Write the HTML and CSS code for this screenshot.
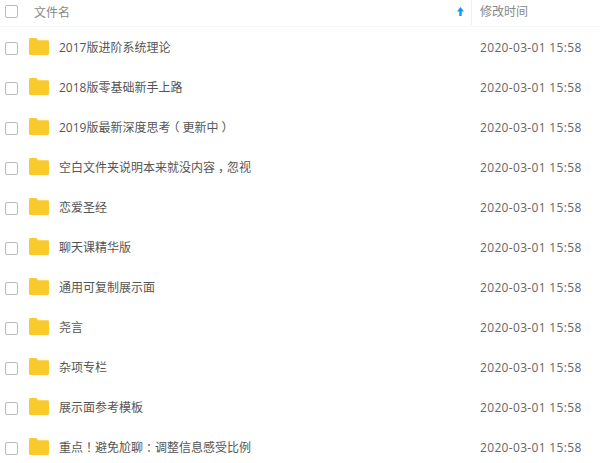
FILE: index.html
```html
<!DOCTYPE html>
<html lang="zh-CN">
<head>
  <meta charset="UTF-8">
  <title>文件列表</title>
  <link rel="stylesheet" href="styles.css">
</head>
<body>
  <svg class="defs" width="0" height="0">
    <symbol id="folder" viewBox="0 0 20 17">
      <path d="M0 1.500C0 .7.6 0 1.400 0h5.400c.5 0 .9.2 1.200.6L9.300 2.200H18.600c.8 0 1.400.6 1.400 1.400v12c0 .8-.6 1.400-1.400 1.400H1.400C.6 17 0 16.400 0 15.600z" fill="#fac92c"/>
    </symbol>
  </svg>
  <div class="head">
    <span class="check"></span>
    <div class="head-name">
      <span>文件名</span>
      <svg class="sort" width="7" height="9" viewBox="0 0 7 9"><path d="M3.500 0 7 4.500H4.700V9H2.300V4.500H0z" fill="#0a9bf2"/></svg>
    </div>
    <div class="head-time">修改时间</div>
  </div>

  <div class="row"><span class="check"></span><svg class="folder"><use href="#folder"/></svg><span class="name">2017版进阶系统理论</span><span class="time">2020-03-01 15:58</span></div>
  <div class="row"><span class="check"></span><svg class="folder"><use href="#folder"/></svg><span class="name">2018版零基础新手上路</span><span class="time">2020-03-01 15:58</span></div>
  <div class="row"><span class="check"></span><svg class="folder"><use href="#folder"/></svg><span class="name">2019版最新深度思考<span class="mark">（</span>更新中<span class="mark">）</span></span><span class="time">2020-03-01 15:58</span></div>
  <div class="row"><span class="check"></span><svg class="folder"><use href="#folder"/></svg><span class="name">空白文件夹说明本来就没内容<span class="mark">，</span>忽视</span><span class="time">2020-03-01 15:58</span></div>
  <div class="row"><span class="check"></span><svg class="folder"><use href="#folder"/></svg><span class="name">恋爱圣经</span><span class="time">2020-03-01 15:58</span></div>
  <div class="row"><span class="check"></span><svg class="folder"><use href="#folder"/></svg><span class="name">聊天课精华版</span><span class="time">2020-03-01 15:58</span></div>
  <div class="row"><span class="check"></span><svg class="folder"><use href="#folder"/></svg><span class="name">通用可复制展示面</span><span class="time">2020-03-01 15:58</span></div>
  <div class="row"><span class="check"></span><svg class="folder"><use href="#folder"/></svg><span class="name">尧言</span><span class="time">2020-03-01 15:58</span></div>
  <div class="row"><span class="check"></span><svg class="folder"><use href="#folder"/></svg><span class="name">杂项专栏</span><span class="time">2020-03-01 15:58</span></div>
  <div class="row"><span class="check"></span><svg class="folder"><use href="#folder"/></svg><span class="name">展示面参考模板</span><span class="time">2020-03-01 15:58</span></div>
  <div class="row"><span class="check"></span><svg class="folder"><use href="#folder"/></svg><span class="name">重点<span class="mark">！</span>避免尬聊<span class="mark">：</span>调整信息感受比例</span><span class="time">2020-03-01 15:58</span></div>
</body>
</html>
```

FILE: styles.css
```css
html, body {
  height: 463px;
  overflow: hidden;
}
body {
  margin: 0;
  background: #fff;
  color: #666;
  font-family: "Open Sans", "Noto Sans CJK SC", sans-serif;
  font-size: 12px;
}
.defs {
  position: absolute;
}

.head {
  display: flex;
  align-items: flex-start;
  height: 26px;
  padding-left: 5px;
  border-bottom: 1px solid #f5f6f7;
  color: #888;
}
.head .check {
  margin-top: 5px;
}
.head-name {
  display: flex;
  align-items: center;
  justify-content: space-between;
  box-sizing: border-box;
  width: 437px;
  height: 23px;
  margin-left: 16px;
  padding-right: 7px;
}
.sort {
  display: block;
}
.head-time {
  height: 25px;
  line-height: 23px;
  padding-left: 8px;
  border-left: 1px solid #f0f0f0;
}

.check {
  flex: none;
  width: 11px;
  height: 11px;
  border: 1px solid #bbb;
  border-radius: 2px;
}

.row {
  display: flex;
  align-items: center;
  height: 40px;
  padding-left: 5px;
}
.row .check {
  margin-top: 2px;
}
.folder {
  flex: none;
  width: 20px;
  height: 17px;
  margin-left: 11px;
  margin-top: -2px;
}
.name {
  width: 421px;
  margin-left: 10px;
  color: #555;
}
/* full-width punctuation sits centred in its box in the original font */
.mark {
  margin: 0 3px;
  font-feature-settings: "halt";
}
.time {
  color: #666;
  letter-spacing: .33px;
}
```
